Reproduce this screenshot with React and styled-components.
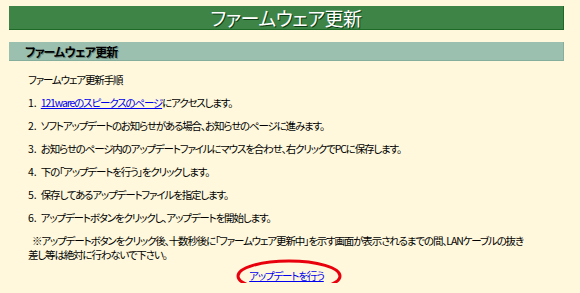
import React from "react";
import styled, { createGlobalStyle } from "styled-components";

const GlobalStyle = createGlobalStyle`
  body {
    margin: 0;
    background: #fff8dc;
    font-family: "Noto Sans CJK JP", "Liberation Sans", sans-serif;
    font-size: 10.5px;
    color: #000;
  }
`;

const Page = styled.div`
  width: 555px;
  padding: 6px 0 0 9px;
`;

const TitleBar = styled.h1`
  margin: 0;
  height: 23px;
  background: #3d8446;
  border-right: 1px solid #1c6a26;
  border-bottom: 1px solid #1c6a26;
  color: #fff;
  font-size: 19px;
  font-weight: 400;
  line-height: 24px;
  text-align: center;
  letter-spacing: -0.5px;
  font-feature-settings: "palt";
  text-shadow: 1px 1px 0 #0d3d14;
`;

const SectionBar = styled.h2`
  margin: 12px 0 0;
  height: 18px;
  padding-left: 16px;
  background: #9cc0af;
  border-right: 1px solid #86ae9c;
  border-bottom: 1px solid #86ae9c;
  font-size: 12px;
  font-weight: 700;
  line-height: 19px;
  letter-spacing: -0.8px;
  font-feature-settings: "palt";
  text-shadow: 1px 1px 0 #6f8f80;
`;

const Body = styled.div`
  display: flex;
  flex-direction: column;
  gap: 9px;
  padding: 12px 0 0 19px;
  letter-spacing: -1.15px;
  font-feature-settings: "palt";
`;

const Para = styled.p`
  margin: 0;
  line-height: 14px;
  white-space: nowrap;
  text-indent: ${(p) => p.indent || 0}px;
`;

const Num = styled.span`
  letter-spacing: 0;
  margin-right: 4px;
`;

const Link = styled.a`
  color: #0000ee;
  text-decoration: underline;
`;

const Action = styled.div`
  position: relative;
  display: flex;
  justify-content: center;
  margin-top: -2px;
  margin-left: -19px;
  line-height: 14px;
`;

const Ring = styled.svg`
  position: absolute;
  left: 50%;
  top: -10px;
  margin-left: -51px;
  pointer-events: none;
`;

const steps = [
  "ソフトアップデートのお知らせがある場合、お知らせのページに進みます。",
  "お知らせのページ内のアップデートファイルにマウスを合わせ、右クリックでPCに保存します。",
  "下の「アップデートを行う」をクリックします。",
  "保存してあるアップデートファイルを指定します。",
  "アップデートボタンをクリックし、アップデートを開始します。",
];

export default function App() {
  return (
    <Page>
      <GlobalStyle />
      <TitleBar>ファームウェア更新</TitleBar>
      <SectionBar>ファームウェア更新</SectionBar>
      <Body>
        <Para>ファームウェア更新手順</Para>
        <Para>
          <Num>1.</Num>
          <Link href="#">121wareのスピークスのページ</Link>にアクセスします。
        </Para>
        {steps.map((s, i) => (
          <Para key={i}>
            <Num>{i + 2}.</Num>
            {s}
          </Para>
        ))}
        <Para indent={4}>
          ※アップデートボタンをクリック後、十数秒後に「ファームウェア更新中」を示す画面が表示されるまでの間、LANケーブルの抜き
          <br />
          差し等は絶対に行わないで下さい。
        </Para>
        <Action>
          <Link href="#">アップデートを行う</Link>
          <Ring width="106" height="34" viewBox="0 0 106 34">
            <ellipse cx="53" cy="17" rx="51" ry="15" fill="none" stroke="#e8000c" strokeWidth="3" />
          </Ring>
        </Action>
      </Body>
    </Page>
  );
}
